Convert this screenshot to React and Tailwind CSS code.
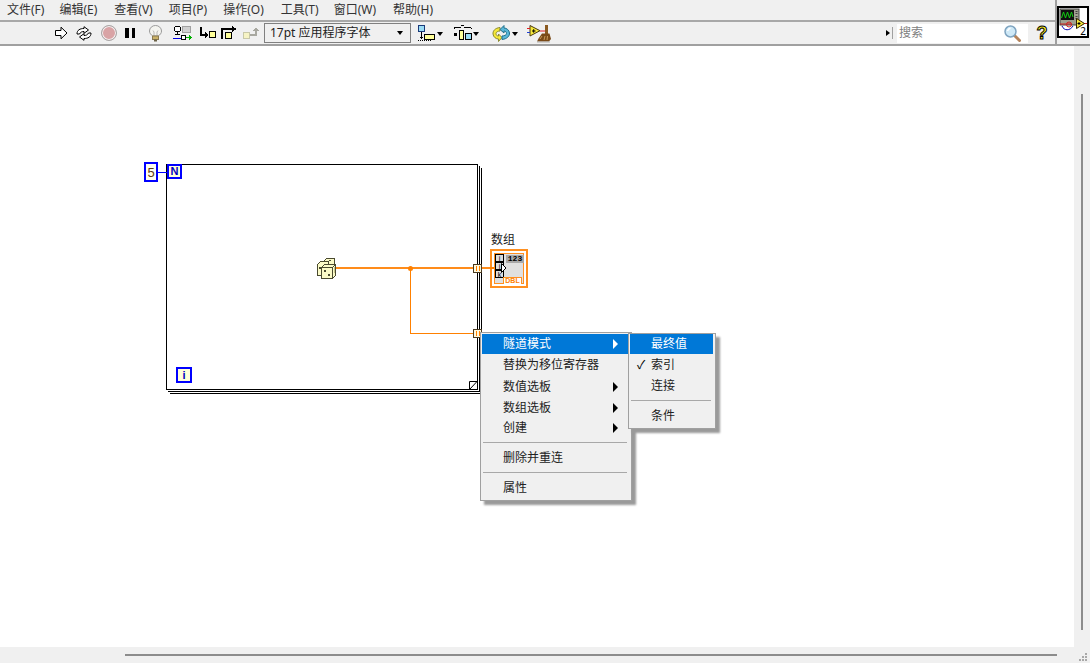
const menus = [
  ['文件(F)', 'ml-[7px]'],
  ['编辑(E)', 'ml-[15px]'],
  ['查看(V)', 'ml-[17px]'],
  ['项目(P)', 'ml-[16px]'],
  ['操作(O)', 'ml-[16px]'],
  ['工具(T)', 'ml-[17px]'],
  ['窗口(W)', 'ml-[15px]'],
  ['帮助(H)', 'ml-[17px]'],
];

function RunArrow() {
  return (
    <svg width="13" height="14" viewBox="0 0 13 14" className="ml-[55px] shrink-0">
      <path d="M.5 4.500H6V1.200L12 7 6 12.800V9.500H.5z" fill="#fff" stroke="#000" />
    </svg>
  );
}

function RunContinuous() {
  return (
    <svg width="16" height="15" viewBox="0 0 16 15" className="ml-[8px] shrink-0">
      <path d="M1 8C1 4 4 2.500 8 2.500V.7L12.500 4 8 7.300V5.500C6 5.500 4.500 6 3.500 8z" fill="#fff" stroke="#000" />
      <path d="M15 7C15 11 12 12.500 8 12.500V14.300L3.500 11 8 7.700V9.500C10 9.500 11.500 9 12.500 7z" fill="#fff" stroke="#000" />
    </svg>
  );
}

function Bulb() {
  return (
    <svg width="15" height="17" viewBox="0 0 15 17" className="ml-[13px] shrink-0">
      <path d="M4.500 11C3 9.500 1.500 8.500 1.500 6A6 5.500 0 0 1 13.500 6C13.500 8.500 12 9.500 10.500 11z" fill="#f4f4f0" stroke="#9a9a9a" />
      <path d="M6 11V7L5 5.500M9 11V7L10 5.500" fill="none" stroke="#b8b8b8" />
      <rect x="4.500" y="11" width="6" height="3.500" fill="#c9b168" stroke="#8a7a50" />
      <rect x="6" y="14.500" width="3" height="2" fill="#6b6247" />
    </svg>
  );
}

function RetainWire() {
  return (
    <svg width="19" height="16" viewBox="0 0 19 16" className="ml-[10px] shrink-0" shapeRendering="crispEdges">
      <circle cx="4.500" cy="4" r="3" fill="#fff" stroke="#000" />
      <rect x="4" y="7" width="1" height="3" fill="#000" />
      <rect x="2" y="9" width="5" height="1" fill="#000" />
      <rect x="9.500" y="1.500" width="8" height="6" fill="#d0d0d0" stroke="#a0a0a0" />
      <rect x="0" y="13" width="8" height="1" fill="#0000e0" />
      <rect x="8.500" y="10.500" width="4" height="4" fill="#fff" stroke="#000" />
      <path d="M13 12h3v-2l3 2.500-3 2.500v-2h-3z" fill="#00b000" />
    </svg>
  );
}

function StepInto() {
  return (
    <svg width="17" height="14" viewBox="0 0 17 14" className="ml-[8px] shrink-0" shapeRendering="crispEdges">
      <path d="M1 1v8h6" fill="none" stroke="#000" strokeWidth="2" />
      <path d="M5 5.500v7l3-3.500z" fill="#000" />
      <rect x="9.500" y="5.500" width="6" height="6" fill="#ffff99" stroke="#000" strokeWidth="1.500" />
    </svg>
  );
}

function StepOver() {
  return (
    <svg width="17" height="15" viewBox="0 0 17 15" className="ml-[4px] shrink-0" shapeRendering="crispEdges">
      <path d="M1 13V3h11" fill="none" stroke="#000" strokeWidth="2" />
      <path d="M11 0v6l5-3z" fill="#000" />
      <rect x="4.500" y="6.500" width="6" height="6" fill="#ffff99" stroke="#000" strokeWidth="1.500" />
    </svg>
  );
}

function StepOut() {
  return (
    <svg width="17" height="14" viewBox="0 0 17 14" className="ml-[4px] shrink-0" shapeRendering="crispEdges">
      <rect x="1.500" y="6.500" width="6" height="6" fill="#f6f3c4" stroke="#c8c8a8" strokeWidth="1.500" />
      <path d="M8 9h6V4" fill="none" stroke="#a8a8a0" strokeWidth="2" />
      <path d="M11 5h6l-3-4z" fill="#a8a8a0" />
    </svg>
  );
}

function DropArrow() {
  return <span className="ml-[1px] mt-[1px] h-0 w-0 shrink-0 border-x-[3.500px] border-t-[4px] border-x-transparent border-t-black" />;
}

function Align() {
  return (
    <div className="ml-[7px] flex shrink-0 items-center">
      <svg width="18" height="17" viewBox="0 0 18 17" shapeRendering="crispEdges">
        <rect x="0.500" y="0.500" width="6" height="6" fill="#9adcf5" stroke="#1a3a7a" />
        <path d="M3 7h1v5h1.500L3.500 14 1.500 12H3z" fill="#000" />
        <path d="M0 15.500h14" stroke="#000" strokeDasharray="1 1" />
        <rect x="6.500" y="9.500" width="10" height="5" fill="#ffff99" stroke="#000" />
      </svg>
      <DropArrow />
    </div>
  );
}

function Distribute() {
  return (
    <div className="ml-[11px] flex shrink-0 items-center">
      <svg width="18" height="16" viewBox="0 0 18 16" shapeRendering="crispEdges">
        <path d="M0 2.500H7M10 2.500H17M0 2.500V4M17 2.500V4" stroke="#000" fill="none" />
        <rect x="7" y="0" width="3" height="1" fill="#000" />
        <rect x="0" y="8" width="3" height="3" fill="#000" />
        <rect x="5.500" y="5.500" width="4" height="9" fill="#ffff99" stroke="#000" />
        <rect x="11.500" y="8.500" width="6" height="6" fill="#9adcf5" stroke="#000" />
      </svg>
      <DropArrow />
    </div>
  );
}

function Reorder() {
  return (
    <div className="ml-[13px] flex shrink-0 items-center">
      <svg width="19" height="17" viewBox="0 0 19 17">
        <path d="M8 2.500C3 3 .7 6 1 9c.3 3 3 5 5.500 5v2.500L10 12.500 6.500 9v2C5 11 4 10 4 8.500 4 7 6 6 8 6z" fill="#f5e83a" stroke="#8a8a30" />
        <path d="M10 14.500c5-.5 7.800-3.500 7.500-6.500-.3-3-3-5-5.500-5V.5L8 4.500 12 8V6c1.500 0 2.500 1 2.500 2.500 0 1.500-2 2.500-4.500 2.500z" fill="#5ab8d8" stroke="#20708c" />
      </svg>
      <DropArrow />
    </div>
  );
}

function Cleanup() {
  return (
    <svg width="24" height="19" viewBox="0 0 24 19" className="ml-[9px] shrink-0">
      <path d="M3 1.500V12L13 6.700z" fill="#f5e83a" stroke="#4a3a10" />
      <path d="M0 4.500h3" stroke="#e02020" />
      <path d="M0 8.500h3" stroke="#2040d0" />
      <path d="M5 7h3.500M6.700 5.200v3.500" stroke="#000" />
      <path d="M13 7h5" stroke="#e02020" />
      <rect x="18" y="1" width="3" height="9" fill="#8a5a20" />
      <path d="M15 9.500h7.500L24 15l-2 2.500H10l1.500-3z" fill="#7a4a18" />
      <path d="M13 15l2-3M17 16l1-4M20 16l.5-4" stroke="#c89a58" />
      <path d="M10 18h13" stroke="#b0b0b0" />
    </svg>
  );
}

function Magnifier() {
  return (
    <svg width="17" height="17" viewBox="0 0 17 17">
      <path d="M10 10l5.500 5.500" stroke="#b5835a" strokeWidth="3" strokeLinecap="round" />
      <circle cx="6.500" cy="6.500" r="5.500" fill="#cfe9f7" stroke="#7fa4c0" strokeWidth="1.500" />
      <path d="M3.500 6C4 4.500 5 3.500 6.500 3.200" fill="none" stroke="#fff" strokeWidth="1.500" />
    </svg>
  );
}

function HelpMark() {
  return (
    <svg width="12" height="16" viewBox="0 0 12 16" className="overflow-visible">
      <text x="6" y="14" textAnchor="middle" fontSize="18" fontWeight="700" fontFamily="Liberation Sans" fill="#f5ea20" stroke="#000" strokeWidth="1">?</text>
    </svg>
  );
}

function ViIcon() {
  return (
    <div className="relative h-[32px] w-[32px] border-2 border-black bg-white">
      <svg width="28" height="28" viewBox="0 0 28 28" className="absolute left-0 top-0">
        <rect x="1" y="1" width="19" height="16" fill="#a0a090" stroke="#404040" />
        <rect x="2" y="2" width="13" height="10" fill="#101010" />
        <path d="M2.500 10L4.500 4l2 6 2-6 2 6 2-6 1.500 5" fill="none" stroke="#10d010" />
        <path d="M17.500 3v3M17.500 8v3" stroke="#404040" strokeWidth="2" strokeDasharray="1 1" />
        <path d="M3 18c2 5 8 5 11 0" fill="none" stroke="#0000b0" />
        <path d="M1 16h12M22 15.500h6" stroke="#d02020" />
        <circle cx="10" cy="16.500" r="2.500" fill="none" stroke="#d02020" />
        <path d="M17.500 10.500v10l8-5z" fill="#f5e83a" stroke="#302000" />
        <path d="M18.500 15.500h3M20 14v3" stroke="#000" />
      </svg>
      <span className="absolute bottom-[-1px] right-[1px] text-[10px] leading-[12px] text-black">2</span>
    </div>
  );
}

function Dice() {
  return (
    <svg width="21" height="22" viewBox="0 0 21 22" className="absolute left-[316px] top-[212px]" shapeRendering="crispEdges">
      <path d="M7.500 3.500L10.500 .5H18.500V7.500H7.500z" fill="#fbfbc8" stroke="#4a4a30" />
      <path d="M1.500 6.500L4.500 3.500H12.500V6.500H9.500V17.500H1.500z" fill="#fbfbc8" stroke="#4a4a30" />
      <path d="M5.500 9.500L8.500 6.500H19.500V17.500L16.500 20.500H5.500z" fill="#fbfbc8" stroke="#4a4a30" />
      <path d="M5.500 9.500H16.500V20.500M16.500 9.500L19.500 6.500" fill="none" stroke="#4a4a30" />
      <rect x="17.500" y="9" width="1" height="6" fill="#c8c890" />
      <rect x="8" y="12" width="2" height="2" fill="#4a4a30" />
      <rect x="12" y="16" width="2" height="2" fill="#4a4a30" />
      <rect x="3" y="9" width="2" height="2" fill="#4a4a30" />
      <rect x="13" y="2" width="2" height="1" fill="#4a4a30" />
    </svg>
  );
}

function Tunnel({ y }) {
  return (
    <div className={`absolute left-[473px] ${y} flex h-[9px] w-[9px] items-center justify-center border border-[#4a3a20] bg-[#fff8dc]`}>
      <span className="h-[5px] w-[4px] border-x border-[#ff8000]" />
    </div>
  );
}

function ArrayTerminal() {
  return (
    <div className="absolute left-[490px] top-[203px] h-[39px] w-[38px] border-2 border-[#ff9020] bg-white p-[2px]">
      <div className="relative h-[31px] w-[30px] border border-[#ff9020] bg-[#e0e0e0]">
        <div className="absolute left-[0px] top-[0px] flex w-[9px] flex-col">
          {['i', 'j', 'k'].map((c) => (
            <span key={c} className="flex h-[8px] w-[9px] items-center justify-center border border-black bg-[#dcdcdc] font-['Liberation_Sans',sans-serif] text-[7px] leading-none text-black">{c}</span>
          ))}
        </div>
        <span className="absolute left-[11px] top-[1px] h-[8px] w-[18px] bg-[#a8a8a8] text-center font-['Liberation_Mono',monospace] text-[8px] font-bold leading-[8px] text-black">123</span>
        <span className="absolute bottom-[-1px] left-[8px] h-[7px] w-[19px] border border-b-0 border-[#ff9020] bg-white text-center font-['Liberation_Sans',sans-serif] text-[7px] font-bold leading-[6px] text-[#ff8000]">DBL</span>
      </div>
      {/* wire end and the terminal's direction mark */}
      <div className="absolute left-[-2px] top-[16px] h-[2px] w-[4px] bg-[#ff8000]" />
      <svg width="6" height="10" viewBox="0 0 6 10" className="absolute left-[9px] top-[12px]">
        <path d="M.5.500V9.500L5 5z" fill="#fff" stroke="#000" />
      </svg>
    </div>
  );
}

function ForLoop() {
  return (
    <>
      {/* stacked frames of the loop */}
      <div className="absolute left-[170px] top-[122px] h-[226px] w-[312px] border-r border-b border-black" />
      <div className="absolute left-[168px] top-[120px] h-[226px] w-[312px] border-r border-b border-black bg-white" />
      <div className="absolute left-[166px] top-[118px] h-[226px] w-[312px] border border-black bg-white" />
      <svg width="10" height="10" viewBox="0 0 10 10" className="absolute left-[468px] top-[334px]">
        <path d="M1.500 9.500V1.500H9L1.500 9.500" fill="#fff" stroke="#000" />
      </svg>

      {/* N terminal with its constant */}
      <div className="absolute left-[144px] top-[116px] flex h-[20px] w-[14px] items-center justify-center border-2 border-[#0000ff] bg-[#fffff0] font-['Liberation_Sans',sans-serif] text-[13px] leading-none text-[#5a3a10]">5</div>
      <div className="absolute left-[158px] top-[126px] h-[1px] w-[9px] bg-[#0000ff]" />
      <div className="absolute left-[167px] top-[118px] flex h-[15px] w-[15px] items-center justify-center border-2 border-[#0000ff] bg-[#ffffd8] font-['Liberation_Sans',sans-serif] text-[11px] font-bold leading-none text-[#0000c0]">N</div>
      <div className="absolute left-[176px] top-[321px] flex h-[16px] w-[16px] items-center justify-center border-2 border-[#0000ff] bg-[#ffffd8] font-['Liberation_Sans',sans-serif] text-[11px] font-bold leading-none text-[#0000c0]">i</div>

      {/* wires */}
      <div className="absolute left-[336px] top-[221px] h-[2px] w-[137px] bg-[#ff8c1a]" />
      <div className="absolute left-[408px] top-[220px] h-[5px] w-[5px] rounded-full bg-[#ff8000]" />
      <div className="absolute left-[410px] top-[222px] h-[65px] w-[1px] bg-[#ff8000]" />
      <div className="absolute left-[410px] top-[287px] h-[1px] w-[63px] bg-[#ff8000]" />
      <div className="absolute left-[482px] top-[221px] h-[2px] w-[9px] bg-[#ff8c1a]" />

      <Dice />
      <Tunnel y="top-[218px]" />
      <Tunnel y="top-[283px]" />
      <span className="absolute left-[491px] top-[186px] text-[12px] leading-[16px] text-[#222]">数组</span>
      <ArrayTerminal />
    </>
  );
}

function MenuRow({ label, active, arrow, check, h = 'h-[21px]' }) {
  return (
    <div className={`relative flex ${h} items-center pl-[21px] text-[12px] ${active ? 'bg-[#0078d7] text-white' : 'text-[#222]'}`}>
      {check && <span className="absolute left-[7px] text-[12px] text-black">✓</span>}
      <span>{label}</span>
      {arrow && <span className={`absolute right-[11px] h-0 w-0 border-y-[5px] border-l-[5px] border-y-transparent ${active ? 'border-l-white' : 'border-l-black'}`} />}
    </div>
  );
}

function ContextMenu() {
  return (
    <div className="absolute left-[480px] top-[286px] w-[152px] border border-[#a0a0a0] bg-[#f0f0f0] pb-[1px] pl-[1px] pr-[2px] pt-[1px] shadow-[4px_4px_2px_#9a9a9a]">
      <MenuRow label="隧道模式" active arrow h="h-[20px]" />
      <MenuRow label="替换为移位寄存器" h="h-[22px]" />
      <MenuRow label="数值选板" arrow />
      <MenuRow label="数组选板" arrow />
      <MenuRow label="创建" arrow h="h-[20px]" />
      <div className="my-[4px] ml-[1px] mr-[2px] h-[1px] bg-[#a8a8a8]" />
      <MenuRow label="删除并重连" />
      <div className="my-[4px] ml-[1px] mr-[2px] h-[1px] bg-[#a8a8a8]" />
      <MenuRow label="属性" h="h-[22px]" />
    </div>
  );
}

function SubMenu() {
  return (
    <div className="absolute left-[628px] top-[287px] w-[88px] border border-[#a0a0a0] bg-[#f0f0f0] pb-[2px] pl-[1px] pr-[2px] shadow-[4px_4px_2px_#9a9a9a]">
      <MenuRow label="最终值" active h="h-[20px]" />
      <MenuRow label="索引" check />
      <MenuRow label="连接" />
      <div className="my-[4px] ml-[1px] mr-[2px] h-[1px] bg-[#a8a8a8]" />
      <MenuRow label="条件" />
    </div>
  );
}

export default function App() {
  return (
    <div className="flex h-[663px] w-[1090px] flex-col overflow-hidden bg-[#f0f0f0] [font-family:'Noto_Sans','Noto_Sans_CJK_SC',sans-serif]">
      <div className="flex h-[46px] shrink-0 border-b-2 border-[#a0a0a0]">
        <div className="flex min-w-0 flex-1 flex-col">
          {/* menu bar */}
          <div className="flex h-[22px] shrink-0 items-center border-b-2 border-[#a8a8a8] pb-[1px] text-[12px] text-[#333]">
            {menus.map(([label, ml]) => (
              <span key={label} className={ml}>{label}</span>
            ))}
          </div>

          {/* tool bar */}
          <div className="flex flex-1 items-center">
            <RunArrow />
            <RunContinuous />
            <div className="ml-[9px] h-[16px] w-[16px] shrink-0 rounded-full border border-[#a8a8a8] bg-[#d9a3a5] shadow-[inset_0_0_0_1px_#f4f4f4]" />
            <div className="ml-[8px] flex shrink-0 gap-[3px]">
              <span className="h-[10px] w-[3.500px] bg-black" />
              <span className="h-[10px] w-[3.500px] bg-black" />
            </div>
            <Bulb />
            <RetainWire />
            <StepInto />
            <StepOver />
            <StepOut />
            <div className="ml-[5px] flex h-[20px] w-[147px] shrink-0 items-center justify-between border border-[#808080] pl-[5px] pr-[7px] text-[12px] text-[#222]">
              <span>17pt 应用程序字体</span>
              <span className="h-0 w-0 border-x-[3.500px] border-t-[4px] border-x-transparent border-t-black" />
            </div>
            <Align />
            <Distribute />
            <Reorder />
            <Cleanup />
            <div className="ml-auto flex items-center">
              <span className="h-0 w-0 border-y-[3px] border-l-[4px] border-y-transparent border-l-black" />
              <span className="ml-[2px] h-[12px] w-[1px] bg-[#a0a0a0]" />
              <div className="ml-[4px] flex h-[19px] w-[131px] items-center justify-between bg-white pl-[2px] pr-[7px] text-[12px] text-[#808080]">
                <span>搜索</span>
                <Magnifier />
              </div>
              <div className="ml-[8px] mr-[7px] flex"><HelpMark /></div>
            </div>
          </div>
        </div>
        <div className="flex w-[35px] shrink-0 items-start border-l-2 border-[#a0a0a0] pt-[6px]">
          <ViIcon />
        </div>
      </div>

      <div className="flex min-h-0 flex-1">
        {/* block diagram */}
        <div className="relative flex-1 overflow-hidden bg-white">
          <ForLoop />
          <ContextMenu />
          <SubMenu />
        </div>
        {/* vertical scroll */}
        <div className="w-[16px] shrink-0 pl-[7px] pt-[48px]">
          <div className="h-[536px] w-[2px] bg-[#8c8c8c]" />
        </div>
      </div>

      {/* horizontal scroll */}
      <div className="relative flex h-[16px] shrink-0 items-center pl-[125px]">
        <div className="h-[2px] w-[932px] bg-[#8c8c8c]" />
        <svg width="11" height="11" viewBox="0 0 11 11" className="absolute bottom-[0px] right-[2px]" shapeRendering="crispEdges">
          <path d="M8 1h2v2H8zM5 4h2v2H5zM8 4h2v2H8zM2 7h2v2H2zM5 7h2v2H5zM8 7h2v2H8z" fill="#a8a8a8" />
        </svg>
      </div>
    </div>
  );
}
